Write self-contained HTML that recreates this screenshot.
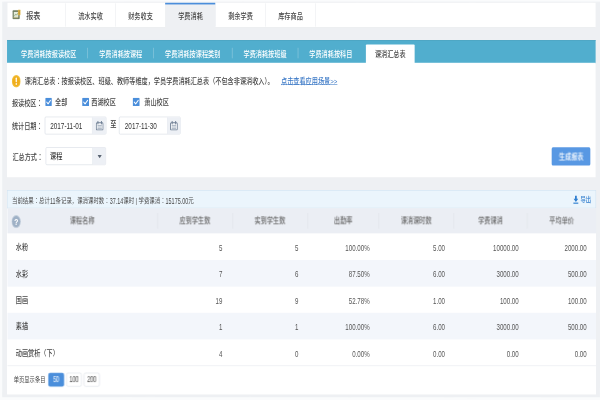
<!DOCTYPE html>
<html lang="zh-CN"><head><meta charset="utf-8"><title>报表</title>
<style>
html,body{margin:0;padding:0;width:600px;height:400px;overflow:hidden;background:#fafbfc;}
#w{position:absolute;left:0;top:0;width:1366px;height:720px;transform-origin:0 0;transform:scale(0.43923865,0.55555555);font-family:"Liberation Sans","Noto Sans CJK SC",sans-serif;font-weight:500;}
#o{position:absolute;left:0;top:0;width:600px;height:400px;overflow:hidden;transform:rotate(0.003deg);}
#w div{position:absolute;}
#w .t{white-space:nowrap;}
#w .a{position:absolute;display:block;}
#w .n{display:inline-block;transform:scale(1,1.24);transform-origin:50% 52%;}
#w .c{font-family:"Noto Sans CJK TC",sans-serif;}
</style></head><body><div id="o"><div id="w">
<div style="left:4.55px;top:2.7px;width:1361.45px;height:712.26px;background:#eef0f3;"></div>
<div style="left:17.07px;top:5.4px;width:1339.36px;height:43.38px;background:#fff;border-bottom:1px solid #e2e4e8;"></div>
<svg class="a" style="left:28.23px;top:17.28px" width="19.12" height="18" viewBox="0 0 20 20" preserveAspectRatio="none"><rect x="0.3" y="1.6" width="17.3" height="18.2" rx="2.2" fill="#707d60"/><rect x="3.6" y="5" width="10.6" height="10" fill="#e6edde"/><path d="M5 13.5 L8 9 L10.5 11.5 L13 7.5" stroke="#8fa87c" stroke-width="1.8" fill="none"/><rect x="3" y="15.6" width="11" height="1.6" fill="#d9cf9a"/><rect x="13.4" y="0" width="6.6" height="11.6" rx="1.5" fill="#d9b44c"/><rect x="15" y="2" width="3" height="8" fill="#c49a2e"/></svg>
<div class="t" style="top:16.98px;font-size:16px;color:#444;line-height:24px;left:59.88px;">报表</div>
<div style="left:148.62px;top:5.94px;width:1px;height:41.94px;background:#e4e6ea;"></div>
<div style="left:262.45px;top:5.94px;width:1px;height:41.94px;background:#e4e6ea;"></div>
<div style="left:376.29px;top:5.94px;width:1px;height:41.94px;background:#e4e6ea;"></div>
<div style="left:490.12px;top:5.94px;width:1px;height:41.94px;background:#e4e6ea;"></div>
<div style="left:603.95px;top:5.94px;width:1px;height:41.94px;background:#e4e6ea;"></div>
<div style="left:717.79px;top:5.94px;width:1px;height:41.94px;background:#e4e6ea;"></div>
<div style="left:376.33px;top:4.5px;width:113.61px;height:45.18px;background:#eef0f3;border-top:3px solid #4a8edb;"></div>
<div class="t" style="top:17.34px;font-size:14px;color:#444;line-height:24px;left:6.04px;width:400px;text-align:center;">流水实收</div>
<div class="t" style="top:17.34px;font-size:14px;color:#444;line-height:24px;left:119.87px;width:400px;text-align:center;">财务收支</div>
<div class="t" style="top:17.34px;font-size:14px;color:#444;line-height:24px;left:233.7px;width:400px;text-align:center;">学费消耗</div>
<div class="t" style="top:17.34px;font-size:14px;color:#444;line-height:24px;left:347.54px;width:400px;text-align:center;">剩余学费</div>
<div class="t" style="top:17.34px;font-size:14px;color:#444;line-height:24px;left:461.37px;width:400px;text-align:center;">库存商品</div>
<div style="left:15.94px;top:72px;width:1340.5px;height:40.86px;background:#51aece;border-top:1px solid #4a9fbd;"></div>
<div style="left:199.32px;top:85.86px;width:1.14px;height:19.44px;background:rgba(255,255,255,.5);"></div>
<div style="left:348.9px;top:85.86px;width:1.14px;height:19.44px;background:rgba(255,255,255,.5);"></div>
<div style="left:527.62px;top:85.86px;width:1.14px;height:19.44px;background:rgba(255,255,255,.5);"></div>
<div style="left:677.65px;top:85.86px;width:1.14px;height:19.44px;background:rgba(255,255,255,.5);"></div>
<div style="left:832.8px;top:80.46px;width:111.33px;height:34.74px;background:#fff;border-radius:2px 2px 0 0;"></div>
<div class="t" style="top:84.66px;font-size:14px;color:#fff;line-height:24px;font-weight:500;left:47.81px;">学费消耗按报读校区</div>
<div class="t" style="top:84.66px;font-size:14px;color:#fff;line-height:24px;font-weight:500;left:225.85px;">学费消耗按课程</div>
<div class="t" style="top:84.66px;font-size:14px;color:#fff;line-height:24px;font-weight:500;left:375.65px;">学费消耗按课程类别</div>
<div class="t" style="top:84.66px;font-size:14px;color:#fff;line-height:24px;font-weight:500;left:554.37px;">学费消耗按班级</div>
<div class="t" style="top:84.66px;font-size:14px;color:#fff;line-height:24px;font-weight:500;left:704.17px;">学费消耗按科目</div>
<div class="t" style="top:84.66px;font-size:14px;color:#444;line-height:24px;left:688.47px;width:400px;text-align:center;">课消汇总表</div>
<div style="left:15.94px;top:112.86px;width:1340.5px;height:206.64px;background:#fff;"></div>
<svg class="a" style="left:26.64px;top:135px" width="20.03" height="22.5" viewBox="0 0 20 20" preserveAspectRatio="none"><circle cx="10" cy="10" r="10" fill="#f3bf3a"/><circle cx="10" cy="10" r="8" fill="#efae1d"/><rect x="8.6" y="4.2" width="2.8" height="7.6" rx="1.2" fill="#fff"/><circle cx="10" cy="14.6" r="1.6" fill="#fff"/></svg>
<div class="t" style="top:133.8px;font-size:14px;color:#444;line-height:24px;left:56.23px;">课消汇总表<span class="c" lang="zh-TW">：</span>按报读校区、班级、教师等维度，学员学费消耗汇总表（不包含非课消收入）。</div>
<div class="t" style="top:133.8px;font-size:14px;color:#3a78c6;line-height:24px;left:639.74px;text-decoration:underline;">点击查看应用场景&gt;&gt;</div>
<div class="t" style="top:171.6px;font-size:14px;color:#444;line-height:24px;left:27.09px;">报读校区<span class="c" lang="zh-TW">：</span></div>
<svg class="a" style="left:103.02px;top:175.95px" width="15.14" height="15.3" viewBox="0 0 16 16" preserveAspectRatio="none"><rect width="16" height="16" rx="2" fill="#4a8edb"/><path d="M3.6 8.2 L6.8 11.4 L12.6 4.8" stroke="#fff" stroke-width="2.2" fill="none" stroke-linecap="round" stroke-linejoin="round"/></svg>
<svg class="a" style="left:186.91px;top:175.95px" width="15.71" height="15.3" viewBox="0 0 16 16" preserveAspectRatio="none"><rect width="16" height="16" rx="2" fill="#4a8edb"/><path d="M3.6 8.2 L6.8 11.4 L12.6 4.8" stroke="#fff" stroke-width="2.2" fill="none" stroke-linecap="round" stroke-linejoin="round"/></svg>
<svg class="a" style="left:302.11px;top:175.95px" width="16.16" height="15.3" viewBox="0 0 16 16" preserveAspectRatio="none"><rect width="16" height="16" rx="2" fill="#4a8edb"/><path d="M3.6 8.2 L6.8 11.4 L12.6 4.8" stroke="#fff" stroke-width="2.2" fill="none" stroke-linecap="round" stroke-linejoin="round"/></svg>
<div class="t" style="top:171.6px;font-size:14px;color:#444;line-height:24px;left:125.22px;">全部</div>
<div class="t" style="top:171.6px;font-size:14px;color:#444;line-height:24px;left:207.75px;">西湖校区</div>
<div class="t" style="top:171.6px;font-size:14px;color:#444;line-height:24px;left:328.52px;">萧山校区</div>
<div class="t" style="top:213.9px;font-size:14px;color:#444;line-height:24px;left:27.09px;">统计日期<span class="c" lang="zh-TW">：</span></div>
<div style="left:102.45px;top:210.15px;width:139.45px;height:31.77px;background:#fff;border:1px solid #cfd5de;border-radius:2.5px;box-sizing:border-box;"></div>
<div style="left:209.23px;top:211.05px;width:31.76px;height:29.97px;background:#edf0f5;border-left:1px solid #cfd5de;border-radius:0 2px 2px 0;box-sizing:border-box;"></div>
<div class="t" style="top:213.9px;font-size:14.5px;color:#333;line-height:24px;left:114.4px;"><span class="n">2017-11-01</span></div>
<svg class="a" style="left:218.33px;top:217.8px" width="17.87" height="17.1" viewBox="0 0 18 18" preserveAspectRatio="none"><rect x="1.2" y="3" width="15.6" height="14" rx="2" fill="#f7f9fb" stroke="#6f7f95" stroke-width="2"/><path d="M5 0.6v4.6M13 0.6v4.6" stroke="#6f7f95" stroke-width="2.2" stroke-linecap="round"/><path d="M4 8.2h10M4 11.2h10M4 14.2h10" stroke="#8796aa" stroke-width="1.4"/></svg>
<div class="t" style="top:212.46px;font-size:14px;color:#333;line-height:24px;font-weight:500;left:250.89px;">至</div>
<div style="left:271.49px;top:210.15px;width:139.22px;height:31.77px;background:#fff;border:1px solid #cfd5de;border-radius:2.5px;box-sizing:border-box;"></div>
<div style="left:379.75px;top:211.05px;width:30.05px;height:29.97px;background:#edf0f5;border-left:1px solid #cfd5de;border-radius:0 2px 2px 0;box-sizing:border-box;"></div>
<div class="t" style="top:213.9px;font-size:14.5px;color:#333;line-height:24px;left:284.13px;"><span class="n">2017-11-30</span></div>
<svg class="a" style="left:387.03px;top:218.34px" width="17.87" height="17.1" viewBox="0 0 18 18" preserveAspectRatio="none"><rect x="1.2" y="3" width="15.6" height="14" rx="2" fill="#f7f9fb" stroke="#6f7f95" stroke-width="2"/><path d="M5 0.6v4.6M13 0.6v4.6" stroke="#6f7f95" stroke-width="2.2" stroke-linecap="round"/><path d="M4 8.2h10M4 11.2h10M4 14.2h10" stroke="#8796aa" stroke-width="1.4"/></svg>
<div class="t" style="top:269.7px;font-size:14px;color:#444;line-height:24px;left:28.23px;">汇总方式<span class="c" lang="zh-TW">：</span></div>
<div style="left:103.82px;top:265.32px;width:137.51px;height:31.68px;background:#fff;border:1px solid #cfd5de;border-radius:2.5px;box-sizing:border-box;"></div>
<div style="left:210.36px;top:266.22px;width:30.05px;height:29.88px;background:#edf0f5;border-left:1px solid #cfd5de;border-radius:0 2px 2px 0;box-sizing:border-box;"></div>
<div class="t" style="top:269.7px;font-size:14px;color:#333;line-height:24px;left:113.83px;">课程</div>
<svg class="a" style="left:221.75px;top:279px" width="9.79" height="5.76" viewBox="0 0 10 6" preserveAspectRatio="none"><path d="M0 0h10L5 6z" fill="#5a6472"/></svg>
<div style="left:1256.49px;top:265.05px;width:87.65px;height:33.03px;background:#5898e3;border-radius:3px;"></div>
<div class="t" style="top:270.78px;font-size:14px;color:#fff;line-height:24px;left:1100.55px;width:400px;text-align:center;">生成报表</div>
<div style="left:15.94px;top:342px;width:1340.96px;height:368.46px;background:#fff;"></div>
<div style="left:15.94px;top:342px;width:1341.53px;height:33.12px;background:#ebf5fc;border:1px solid #cfe1f0;box-sizing:border-box;"></div>
<div class="t" style="top:348.9px;font-size:12.33px;color:#4a4a4a;line-height:24px;font-weight:400;left:27.32px;">当前结果<span class="c" lang="zh-TW">：</span>总计<span class="n">11</span>条记录，课消课时数<span class="c" lang="zh-TW">：</span><span class="n">37.14</span>课时 | 学费课消<span class="c" lang="zh-TW">：</span><span class="n">15175.00</span>元</div>
<svg class="a" style="left:1304.76px;top:352.08px" width="12.29" height="14.76" viewBox="0 0 12 14" preserveAspectRatio="none"><path d="M4 0h4v5.5h3.2L6 11 0.8 5.5H4z" fill="#2f7fd0"/><rect x="0" y="12" width="12" height="2" fill="#2f7fd0"/></svg>
<div class="t" style="top:347.46px;font-size:12px;color:#2a7acc;line-height:24px;left:1321.83px;">导出</div>
<div style="left:17.07px;top:375.12px;width:1339.82px;height:44.64px;background:#ebeef4;"></div>
<svg class="a" style="left:26.18px;top:387px" width="21.63" height="23.76" viewBox="0 0 20 20" preserveAspectRatio="none"><circle cx="10" cy="10" r="10" fill="#c3cfdc"/><circle cx="10" cy="10" r="8.3" fill="#9fb1c6"/><text x="10" y="15" font-family="Liberation Sans, sans-serif" font-size="14" font-weight="700" fill="#fff" text-anchor="middle">?</text></svg>
<div class="t" style="top:385.08px;font-size:14px;color:#666;line-height:24px;left:-12.63px;width:400px;text-align:center;">课程名称</div>
<div class="t" style="top:385.08px;font-size:14px;color:#666;line-height:24px;left:243.95px;width:400px;text-align:center;">应到学生数</div>
<div class="t" style="top:385.08px;font-size:14px;color:#666;line-height:24px;left:414.7px;width:400px;text-align:center;">实到学生数</div>
<div class="t" style="top:385.08px;font-size:14px;color:#666;line-height:24px;left:581.58px;width:400px;text-align:center;">出勤率</div>
<div class="t" style="top:385.08px;font-size:14px;color:#666;line-height:24px;left:747.78px;width:400px;text-align:center;">课消课时数</div>
<div class="t" style="top:385.08px;font-size:14px;color:#666;line-height:24px;left:916.7px;width:400px;text-align:center;">学费课消</div>
<div class="t" style="top:385.08px;font-size:14px;color:#666;line-height:24px;left:1078.8px;width:400px;text-align:center;">平均单价</div>
<div style="left:358.3px;top:384.3px;width:1px;height:27.9px;background:#dcdfe6;"></div>
<div style="left:528.6px;top:384.3px;width:1px;height:27.9px;background:#dcdfe6;"></div>
<div style="left:699.8px;top:384.3px;width:1px;height:27.9px;background:#dcdfe6;"></div>
<div style="left:862.36px;top:384.3px;width:1px;height:27.9px;background:#dcdfe6;"></div>
<div style="left:1032.42px;top:384.3px;width:1px;height:27.9px;background:#dcdfe6;"></div>
<div style="left:1200.21px;top:384.3px;width:1px;height:27.9px;background:#dcdfe6;"></div>
<div class="t" style="top:433.14px;font-size:14px;color:#444;line-height:24px;left:35.86px;">水粉</div>
<div class="t" style="top:433.14px;font-size:14px;color:#555;line-height:24px;right:859.67px;text-align:right;"><span class="n">5</span></div>
<div class="t" style="top:433.14px;font-size:14px;color:#555;line-height:24px;right:686.64px;text-align:right;"><span class="n">5</span></div>
<div class="t" style="top:433.14px;font-size:14px;color:#555;line-height:24px;right:524.54px;text-align:right;"><span class="n">100.00%</span></div>
<div class="t" style="top:433.14px;font-size:14px;color:#555;line-height:24px;right:352.88px;text-align:right;"><span class="n">5.00</span></div>
<div class="t" style="top:433.14px;font-size:14px;color:#555;line-height:24px;right:185.09px;text-align:right;"><span class="n">10000.00</span></div>
<div class="t" style="top:433.14px;font-size:14px;color:#555;line-height:24px;right:30.28px;text-align:right;"><span class="n">2000.00</span></div>
<div style="left:17.07px;top:468.36px;width:1339.82px;height:47.7px;background:#f3f6fb;"></div>
<div class="t" style="top:481.29px;font-size:14px;color:#444;line-height:24px;left:35.86px;">水彩</div>
<div class="t" style="top:481.29px;font-size:14px;color:#555;line-height:24px;right:859.67px;text-align:right;"><span class="n">7</span></div>
<div class="t" style="top:481.29px;font-size:14px;color:#555;line-height:24px;right:686.64px;text-align:right;"><span class="n">6</span></div>
<div class="t" style="top:481.29px;font-size:14px;color:#555;line-height:24px;right:524.54px;text-align:right;"><span class="n">87.50%</span></div>
<div class="t" style="top:481.29px;font-size:14px;color:#555;line-height:24px;right:352.88px;text-align:right;"><span class="n">6.00</span></div>
<div class="t" style="top:481.29px;font-size:14px;color:#555;line-height:24px;right:185.09px;text-align:right;"><span class="n">3000.00</span></div>
<div class="t" style="top:481.29px;font-size:14px;color:#555;line-height:24px;right:30.28px;text-align:right;"><span class="n">500.00</span></div>
<div class="t" style="top:528.81px;font-size:14px;color:#444;line-height:24px;left:35.86px;">国画</div>
<div class="t" style="top:528.81px;font-size:14px;color:#555;line-height:24px;right:859.67px;text-align:right;"><span class="n">19</span></div>
<div class="t" style="top:528.81px;font-size:14px;color:#555;line-height:24px;right:686.64px;text-align:right;"><span class="n">9</span></div>
<div class="t" style="top:528.81px;font-size:14px;color:#555;line-height:24px;right:524.54px;text-align:right;"><span class="n">52.78%</span></div>
<div class="t" style="top:528.81px;font-size:14px;color:#555;line-height:24px;right:352.88px;text-align:right;"><span class="n">1.00</span></div>
<div class="t" style="top:528.81px;font-size:14px;color:#555;line-height:24px;right:185.09px;text-align:right;"><span class="n">100.00</span></div>
<div class="t" style="top:528.81px;font-size:14px;color:#555;line-height:24px;right:30.28px;text-align:right;"><span class="n">100.00</span></div>
<div style="left:17.07px;top:563.4px;width:1339.82px;height:47.52px;background:#f3f6fb;"></div>
<div class="t" style="top:576.24px;font-size:14px;color:#444;line-height:24px;left:35.86px;">素描</div>
<div class="t" style="top:576.24px;font-size:14px;color:#555;line-height:24px;right:859.67px;text-align:right;"><span class="n">1</span></div>
<div class="t" style="top:576.24px;font-size:14px;color:#555;line-height:24px;right:686.64px;text-align:right;"><span class="n">1</span></div>
<div class="t" style="top:576.24px;font-size:14px;color:#555;line-height:24px;right:524.54px;text-align:right;"><span class="n">100.00%</span></div>
<div class="t" style="top:576.24px;font-size:14px;color:#555;line-height:24px;right:352.88px;text-align:right;"><span class="n">6.00</span></div>
<div class="t" style="top:576.24px;font-size:14px;color:#555;line-height:24px;right:185.09px;text-align:right;"><span class="n">3000.00</span></div>
<div class="t" style="top:576.24px;font-size:14px;color:#555;line-height:24px;right:30.28px;text-align:right;"><span class="n">500.00</span></div>
<div class="t" style="top:623.94px;font-size:14px;color:#444;line-height:24px;left:35.86px;">动画赏析（下）</div>
<div class="t" style="top:623.94px;font-size:14px;color:#555;line-height:24px;right:859.67px;text-align:right;"><span class="n">4</span></div>
<div class="t" style="top:623.94px;font-size:14px;color:#555;line-height:24px;right:686.64px;text-align:right;"><span class="n">0</span></div>
<div class="t" style="top:623.94px;font-size:14px;color:#555;line-height:24px;right:524.54px;text-align:right;"><span class="n">0.00%</span></div>
<div class="t" style="top:623.94px;font-size:14px;color:#555;line-height:24px;right:352.88px;text-align:right;"><span class="n">0.00</span></div>
<div class="t" style="top:623.94px;font-size:14px;color:#555;line-height:24px;right:185.09px;text-align:right;"><span class="n">0.00</span></div>
<div class="t" style="top:623.94px;font-size:14px;color:#555;line-height:24px;right:30.28px;text-align:right;"><span class="n">0.00</span></div>
<div style="left:17.07px;top:658.44px;width:1339.82px;height:0.9px;background:#e4e7ec;"></div>
<div class="t" style="top:671.1px;font-size:12px;color:#444;line-height:24px;font-weight:400;left:31.42px;">单页显示条目</div>
<div style="left:109.96px;top:670.5px;width:36.2px;height:25.38px;background:#4a8edb;border-radius:4px;"></div>
<div style="left:151.17px;top:670.5px;width:34.83px;height:25.38px;background:#fff;border:1px solid #d3d8e0;border-radius:4px;box-sizing:border-box;"></div>
<div style="left:191.24px;top:670.5px;width:35.52px;height:25.38px;background:#fff;border:1px solid #d3d8e0;border-radius:4px;box-sizing:border-box;"></div>
<div class="t" style="top:671.1px;font-size:12px;color:#fff;line-height:24px;left:-71.94px;width:400px;text-align:center;"><span class="n">50</span></div>
<div class="t" style="top:671.1px;font-size:12px;color:#333;line-height:24px;left:-31.41px;width:400px;text-align:center;"><span class="n">100</span></div>
<div class="t" style="top:671.1px;font-size:12px;color:#333;line-height:24px;left:9px;width:400px;text-align:center;"><span class="n">200</span></div>
</div></div></body></html>
